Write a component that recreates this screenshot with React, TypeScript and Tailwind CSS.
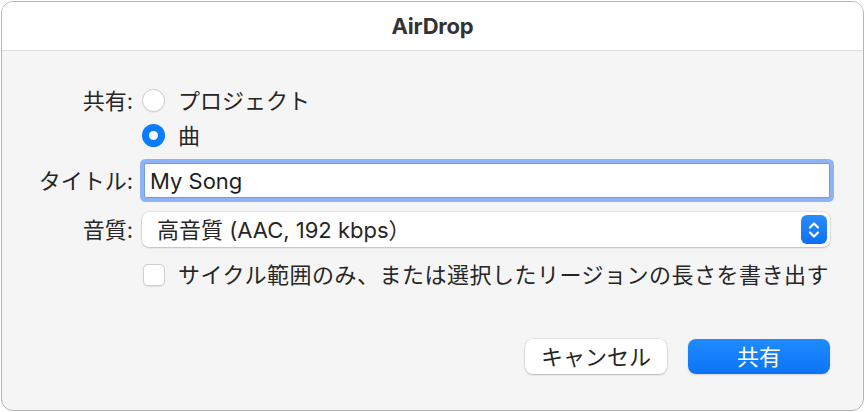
import React from "react";

const font = { fontFamily: '"Inter", "Noto Sans CJK JP", sans-serif' };

export default function App() {
  return (
    <div className="w-[867px] h-[412px] bg-white p-px" style={font}>
      <div className="w-[863px] h-[410px] rounded-[12px] border border-[#b4b4b4] overflow-hidden bg-[#f5f5f5] flex flex-col">
        <div className="h-[49px] bg-white border-b border-[#dedede] flex items-center justify-center shrink-0">
          <span className="text-[22px] font-bold text-[#333333] tracking-[-0.2px]">AirDrop</span>
        </div>
        <div className="flex-1 flex flex-col pr-[33px] text-[22px] text-[#262626]">
          <div className="grid grid-cols-[131px_minmax(0,1fr)] gap-x-[9px] items-center mt-[38px]">
            <div className="text-right leading-none whitespace-nowrap">共有:</div>
            <div className="flex items-center gap-[13px] leading-none">
              <span className="w-[23px] h-[23px] rounded-full bg-white border border-[#cfcfcf] shadow-[0_0.5px_1px_rgba(0,0,0,0.08)]"></span>
              <span>プロジェクト</span>
            </div>
            <div className="h-[12px] col-span-2"></div>
            <div></div>
            <div className="flex items-center gap-[13px] leading-none">
              <span className="w-[23px] h-[23px] rounded-full bg-[#0a7cff] flex items-center justify-center">
                <span className="w-[9px] h-[9px] rounded-full bg-white"></span>
              </span>
              <span>曲</span>
            </div>
            <div className="h-[12px] col-span-2"></div>
            <div className="text-right leading-none whitespace-nowrap">タイトル:</div>
            <div className="pl-[2px] py-[4px]">
              <div className="h-[35px] bg-white border border-[#6f9ae8] shadow-[0_0_0_4px_rgba(80,140,245,0.62)] rounded-[2px] flex items-center px-[5px] leading-none text-[#1e1e1e]">
                My Song
              </div>
            </div>
            <div className="h-[10px] col-span-2"></div>
            <div className="text-right leading-none whitespace-nowrap">音質:</div>
            <div className="h-[35px] bg-white rounded-[7px] shadow-[0_0_0_0.5px_rgba(0,0,0,0.12),0_1px_2px_rgba(0,0,0,0.18)] flex items-center justify-between pl-[15px] pr-[3px] leading-none">
              <span>高音質 (AAC, 192 kbps）</span>
              <span className="w-[26px] h-[29px] rounded-[6px] bg-gradient-to-b from-[#2b8cff] to-[#0a70f2] flex items-center justify-center">
                <svg width="14" height="20" viewBox="0 0 14 20" fill="none" stroke="white" strokeWidth="2.2" strokeLinecap="round" strokeLinejoin="round">
                  <path d="M3 7.5 L7 3.5 L11 7.5" />
                  <path d="M3 12.5 L7 16.5 L11 12.5" />
                </svg>
              </span>
            </div>
            <div className="h-[17px] col-span-2"></div>
            <div></div>
            <div className="flex items-center gap-[13px] leading-none pl-[1px] whitespace-nowrap min-w-0">
              <span className="w-[22px] h-[22px] rounded-[5px] bg-white border border-[#cfcfcf] shadow-[0_0.5px_1px_rgba(0,0,0,0.08)] shrink-0"></span>
              <span className="tracking-[0.5px]">サイクル範囲のみ、または選択したリージョンの長さを書き出す</span>
            </div>
          </div>
          <div className="flex justify-end gap-[21px] mt-[53px]">
            <button className="w-[142px] h-[35px] rounded-[8px] bg-white shadow-[0_0_0_0.5px_rgba(0,0,0,0.12),0_1px_2px_rgba(0,0,0,0.2)] text-[22px] text-[#262626] leading-none">
              キャンセル
            </button>
            <button className="w-[142px] h-[35px] rounded-[8px] bg-gradient-to-b from-[#1f8bff] to-[#0a74f5] shadow-[0_1px_2px_rgba(0,0,0,0.15)] text-[22px] text-white leading-none">
              共有
            </button>
          </div>
        </div>
      </div>
    </div>
  );
}
